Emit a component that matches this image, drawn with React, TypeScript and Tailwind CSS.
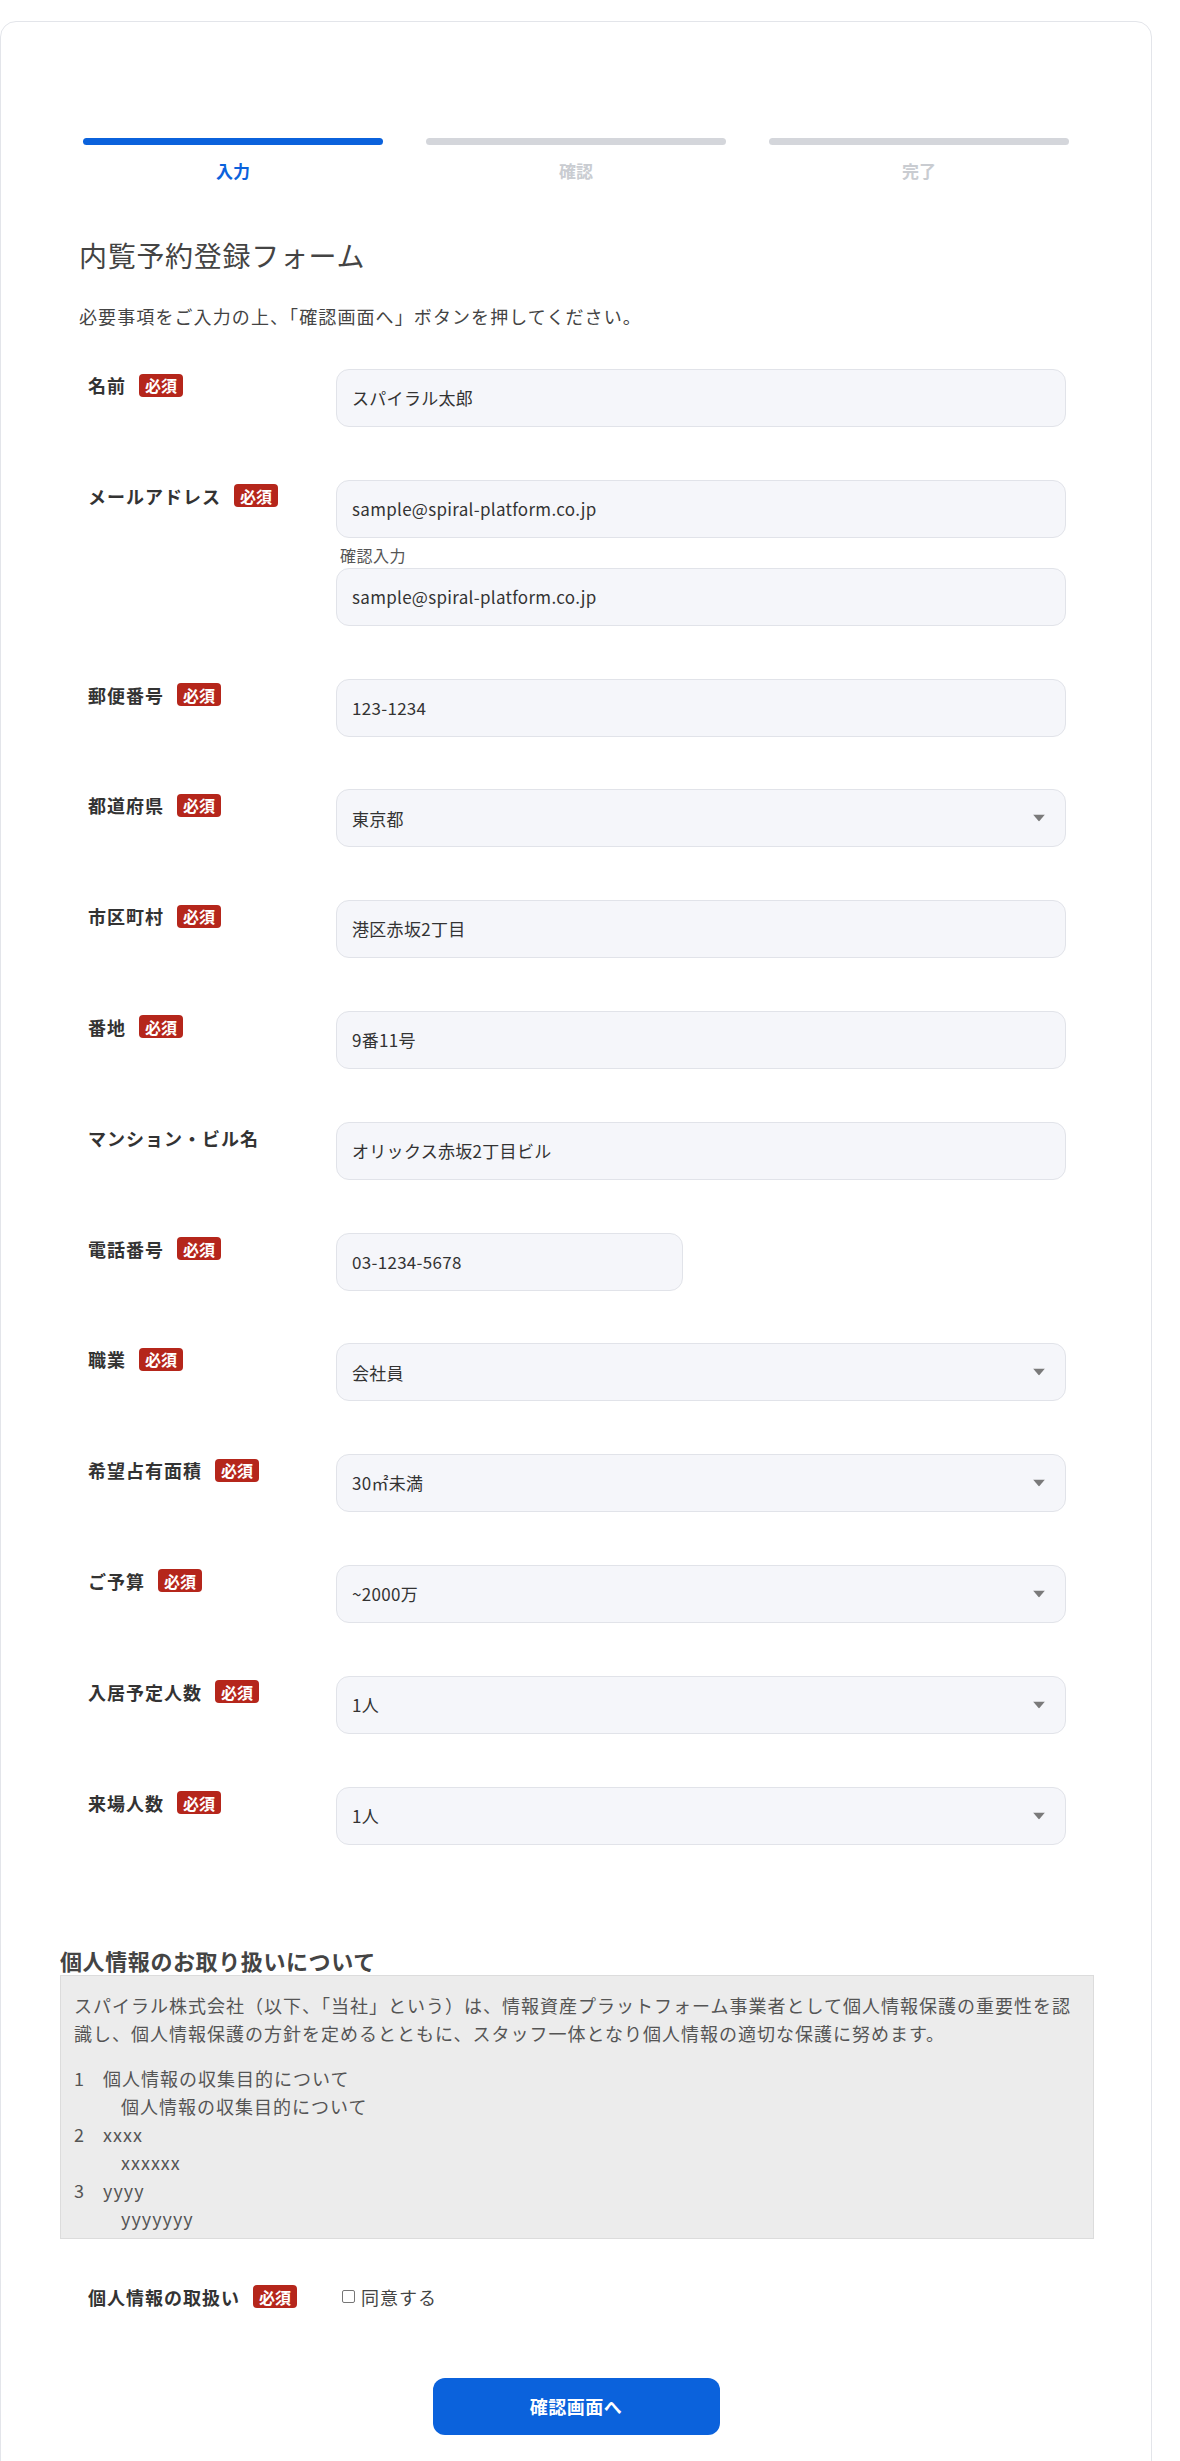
import React from "react";

type Row = {
  label: string;
  req: boolean;
  value: string;
  select?: boolean;
  confirm?: boolean;
  narrow?: boolean;
};

const rows: Row[] = [
  { label: "名前", req: true, value: "スパイラル太郎" },
  { label: "メールアドレス", req: true, value: "sample@spiral-platform.co.jp", confirm: true },
  { label: "郵便番号", req: true, value: "123-1234" },
  { label: "都道府県", req: true, value: "東京都", select: true },
  { label: "市区町村", req: true, value: "港区赤坂2丁目" },
  { label: "番地", req: true, value: "9番11号" },
  { label: "マンション・ビル名", req: false, value: "オリックス赤坂2丁目ビル" },
  { label: "電話番号", req: true, value: "03-1234-5678", narrow: true },
  { label: "職業", req: true, value: "会社員", select: true },
  { label: "希望占有面積", req: true, value: "30㎡未満", select: true },
  { label: "ご予算", req: true, value: "~2000万", select: true },
  { label: "入居予定人数", req: true, value: "1人", select: true },
  { label: "来場人数", req: true, value: "1人", select: true },
];

function Badge() {
  return (
    <span className="inline-flex h-[23px] items-center rounded-[4px] bg-[#b5261b] px-[6px] text-[16px] font-bold leading-none text-white">
      必須
    </span>
  );
}

function Field({ value, select, narrow }: { value: string; select?: boolean; narrow?: boolean }) {
  return (
    <div
      className={`relative flex h-[58px] items-center rounded-[13px] border border-[#e1e3e9] bg-[#f5f6fa] pl-[15px] text-[17px] tracking-[0.3px] text-[#333] ${
        narrow ? "w-[347px]" : "w-[730px]"
      }`}
    >
      <span>{value}</span>
      {select && (
        <svg className="absolute right-[20px] top-1/2 -translate-y-1/2" width="12" height="7" viewBox="0 0 12 7">
          <path d="M0 0 H12 L6 7 Z" fill="#7a7a7a" />
        </svg>
      )}
    </div>
  );
}

export default function App() {
  return (
    <div
      className="min-h-screen bg-white"
      style={{ fontFamily: '"Noto Sans CJK JP", "Noto Sans", sans-serif' }}
    >
      <div className="h-[21px]" />
      <div className="w-[1152px] rounded-t-[16px] border border-[#e3e5ea] bg-white pb-[60px]">
        {/* Progress */}
        <div className="flex gap-[43px] pl-[82px] pt-[116px]">
          {[
            { t: "入力", active: true },
            { t: "確認", active: false },
            { t: "完了", active: false },
          ].map((s) => (
            <div key={s.t} className="flex w-[300px] flex-col items-center">
              <div className={`h-[7px] w-full rounded-full ${s.active ? "bg-[#0b62dc]" : "bg-[#d4d6db]"}`} />
              <div
                className={`mt-[14px] text-[17px] font-bold leading-[24px] ${
                  s.active ? "text-[#0b62dc]" : "text-[#c9ccd1]"
                }`}
              >
                {s.t}
              </div>
            </div>
          ))}
        </div>

        {/* Title */}
        <h1 className="ml-[78px] mt-[52px] text-[28px] font-normal leading-[40px] tracking-[0.7px] text-[#444]">
          内覧予約登録フォーム
        </h1>
        <p className="ml-[78px] mt-[27px] text-[18px] leading-[28px] tracking-[1.1px] text-[#444]">
          必要事項をご入力の上、「確認画面へ」ボタンを押してください。
        </p>

        {/* Rows */}
        <div className="ml-[87px] mt-[39px] flex flex-col gap-[52.8px]">
          {rows.map((r) => (
            <div key={r.label} className="flex">
              <div className="mt-[4px] flex h-[24px] w-[248px] items-center gap-[13px]">
                <span className="text-[18px] font-bold leading-[24px] tracking-[1px] text-[#333]">{r.label}</span>
                {r.req && <Badge />}
              </div>
              <div className="flex flex-col">
                <Field value={r.value} select={r.select} narrow={r.narrow} />
                {r.confirm && (
                  <>
                    <div className="mb-[2px] ml-[4px] mt-[6px] text-[16px] leading-[22px] tracking-[0.5px] text-[#555]">
                      確認入力
                    </div>
                    <Field value={r.value} />
                  </>
                )}
              </div>
            </div>
          ))}
        </div>

        {/* Privacy */}
        <div className="ml-[59px] mt-[100px]">
          <h2 className="text-[22px] font-bold leading-[30px] tracking-[0.6px] text-[#444]">
            個人情報のお取り扱いについて
          </h2>
          <div className="h-[264px] w-[1034px] overflow-hidden border border-[#dcdcdc] bg-[#ececec] pl-[13px] pr-[8px] pt-[15px] text-[18px] leading-[28px] tracking-[1px] text-[#555]">
            <p>
              スパイラル株式会社（以下、「当社」という）は、情報資産プラットフォーム事業者として個人情報保護の重要性を認識し、個人情報保護の方針を定めるとともに、スタッフ一体となり個人情報の適切な保護に努めます。
            </p>
            <div className="mt-[17px]">
              {[
                ["1", "個人情報の収集目的について", "個人情報の収集目的について"],
                ["2", "xxxx", "xxxxxx"],
                ["3", "yyyy", "yyyyyyy"],
                ["4", "zzzz", "zzzzzz"],
              ].map(([n, a, b]) => (
                <div key={n}>
                  <div className="flex">
                    <span className="w-[29px]">{n}</span>
                    <span>{a}</span>
                  </div>
                  <div className="pl-[47px]">{b}</div>
                </div>
              ))}
            </div>
          </div>
        </div>

        {/* Agreement */}
        <div className="ml-[87px] mt-[46px] flex items-center">
          <div className="flex h-[24px] w-[248px] items-center gap-[13px]">
            <span className="text-[18px] font-bold leading-[24px] tracking-[1px] text-[#333]">個人情報の取扱い</span>
            <Badge />
          </div>
          <label className="ml-[6px] flex items-center gap-[6px] text-[18px] leading-[24px] tracking-[1px] text-[#444]">
            <span className="inline-block h-[13px] w-[13px] rounded-[2px] border border-[#767676] bg-white" />
            <span>同意する</span>
          </label>
        </div>

        {/* Button */}
        <div className="mt-[69px] flex justify-center">
          <button className="h-[57px] w-[287px] rounded-[12px] bg-[#0b62dc] text-[18px] font-bold tracking-[0.5px] text-white">
            確認画面へ
          </button>
        </div>
      </div>
    </div>
  );
}
